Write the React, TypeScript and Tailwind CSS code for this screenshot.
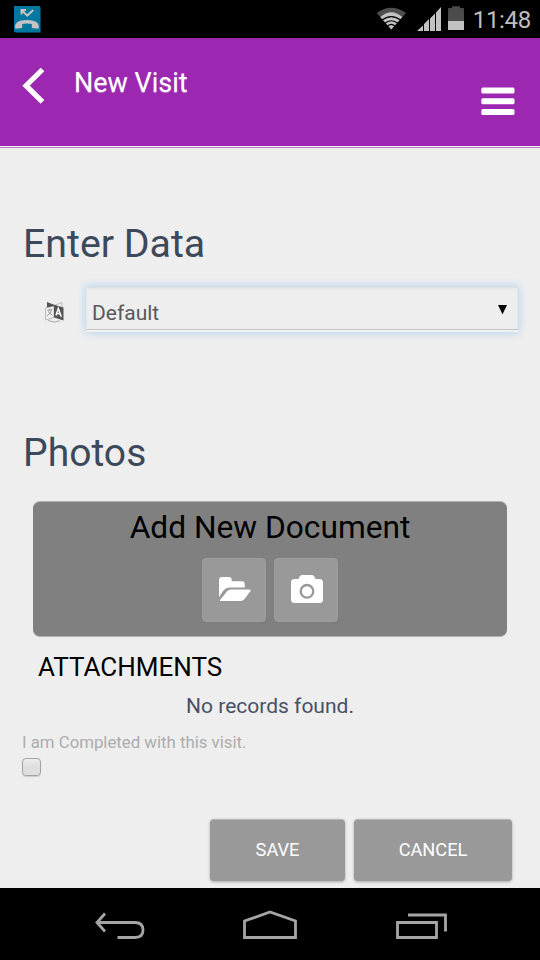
import React from 'react';

function StatusBar() {
  return (
    <div className="flex h-[38px] items-start justify-between bg-black">
      <svg className="ml-[14px] mt-[6px]" width="27" height="27" viewBox="14 6 27 27">
        <rect x="15" y="7" width="26" height="26" rx="1" fill="#033f55" />
        <rect x="14" y="6" width="26" height="26" fill="#0277a0" />
        <path d="M21.500 14.500V10h4.500M21.800 10.200l5.500 5.400 6-5.600" fill="none" stroke="#c4c4c4" strokeWidth="2" />
        <path d="M15.500 28.700C14 24 17 20 27 20S40 24 38.500 28.700L31.800 28V24Q27 22.900 22.200 24V28Z" fill="#c4c4c4" />
      </svg>
      <div className="flex items-start">
        <svg width="90" height="32" viewBox="376 0 90 32">
          <path d="M376.700 13Q391.300 2.500 406 13L391.300 29.500Z" fill="#4e4e4e" />
          <path d="M380.300 17Q391.300 7.500 402.300 17L391.300 29.500Z" fill="#c2c2c2" />
          <path d="M381.500 20.300Q391.300 12.900 401.100 20.300M384.500 23.500Q391.300 18 398.100 23.500M387.500 26.200Q391.300 22.600 395.100 26.200" fill="none" stroke="#000" strokeWidth="1.200" />
          <path d="M417 31L423 25.500V31ZM424 31V24L429 19V31ZM430 31V18.500L435 13.500V31ZM436 31V12.500L441 7V31Z" fill="#c2c2c2" />
          <path d="M448 30V9Q448 8 449 8H452V7Q452 6.300 453 6.300H459Q460 6.300 460 7V8H463Q464 8 464 9V30Z" fill="#4b4b4b" />
          <path d="M448 21H464V30H448Z" fill="#c2c2c2" />
        </svg>
        <span className="mr-[9px] mt-[5px] w-[65px] text-right text-[24px] leading-[30px] tracking-[-0.300px] text-[#bebebe]">11:48</span>
      </div>
    </div>
  );
}

function Header() {
  return (
    <header className="flex h-[110px] items-start border-b border-[#b97fc6] bg-[#9c27b0] shadow-[inset_0_-1px_0_#f6edf7]">
      <svg className="ml-[22px] mt-[29px]" width="23" height="37" viewBox="22 67 23 37">
        <path d="M42.500 69.500L26 85.700L42.500 101.800" fill="none" stroke="#fff" strokeWidth="5.200" />
      </svg>
      <h1 className="ml-[29px] mt-[29px] grow whitespace-nowrap text-[27px] leading-[32px] text-white [text-shadow:0_1px_1px_rgba(255,255,255,.4)]">New Visit</h1>
      <svg className="mr-[25px] mt-[49px]" width="34" height="29" viewBox="0 0 34 29">
        <g fill="#fff">
          <rect x="0.300" y="0.600" width="33.200" height="6" rx="1.500" />
          <rect x="0.300" y="11.300" width="33.200" height="6" rx="1.500" />
          <rect x="0.300" y="22.100" width="33.200" height="6" rx="1.500" />
        </g>
      </svg>
    </header>
  );
}

function LanguageSelect() {
  return (
    <div className="mt-[18px] flex h-[44px] items-start">
      <svg className="ml-[44px] mt-[14px]" width="21" height="22" viewBox="44 301 21 22">
        <path d="M47 303L54 305.500L62 302.500V307M45.500 308L54 305.500V317.500L45.500 320Z" fill="none" stroke="#b5b5b5" strokeWidth=".9" />
        <path d="M47 302L54 304.800V306L47 307.500ZM54 304.800L63.500 307.600V320.500L54 317.500Z" fill="#545454" />
        <path d="M48 320.500Q54 323.600 60 320.800" fill="none" stroke="#aaa" />
        <path d="M47.500 310.500L52.300 309.500M49.500 308.500V310M51.500 310Q50.500 314 46.800 316M48 311.500L52.500 315.300" fill="none" stroke="#939393" strokeWidth=".9" />
        <path d="M56 315.500L58.300 308.500L61.300 316.800M57 313.300L60.200 314" fill="none" stroke="#fff" strokeWidth="1.500" />
      </svg>
      <div className="ml-[21px] flex h-[45px] w-[432px] items-start border-b-2 border-[#f1f1f1] shadow-[0_0_8px_1px_#b5d5ee]">
        <div className="flex h-[43px] w-full items-start justify-between border-b border-[#c7c7c7] bg-[#eee] shadow-[inset_0_1px_2px_#ddd9d9]">
          <span className="ml-[6px] mt-[10px] text-[21px] leading-[32px] text-[#595959]">Default</span>
          <svg className="mr-[10.500px] mt-[18px]" width="10" height="10" viewBox="0 0 10 10"><path d="M0 0H9L4.500 9.300Z" fill="#000" /></svg>
        </div>
      </div>
    </div>
  );
}

const raised = 'border border-[#9d9d9d] bg-[#999] shadow-[0_1px_2px_rgba(0,0,0,.03)]';

function DocumentPanel() {
  return (
    <section className="ml-[33px] mt-[25px] flex h-[136px] w-[474px] flex-col items-center rounded-[7px] border-y border-[#b0b0b0] bg-[#808080]">
      <h3 className="mt-[5px] whitespace-nowrap text-[31.700px] leading-[42px] text-black">Add New Document</h3>
      <div className="mt-[9px] flex gap-[8px]">
        <button className={`flex size-[64px] items-center justify-center rounded-[4px] ${raised}`}>
          <svg className="translate-x-px -translate-y-px" width="34" height="26" viewBox="218 576 34 26" fill="#fff">
            <path d="M219 597V580Q219 577 222 577H229Q231.700 577 231.700 580V581.300H242Q244.700 581.300 244.700 584V587.500H230Q226 587.500 223.500 590.500Z" />
            <path d="M220 600L227.200 591.200Q228.800 589.500 231 589.500H249.500Q251.500 589.500 250.300 591.200L244.500 599Q243 601 240.500 601H221Q219.500 601 220 600Z" />
          </svg>
        </button>
        <button className={`flex size-[64px] items-center justify-center rounded-[4px] ${raised}`}>
          <svg className="translate-x-px -translate-y-px" width="34" height="30" viewBox="290 574 34 30">
            <path d="M291 582.500Q291 579 294.500 579H298.500L299.500 576.700Q300.100 575 302 575H312Q313.900 575 314.500 576.700L315.500 579H319.500Q323 579 323 582.500V599.500Q323 603 319.500 603H294.500Q291 603 291 599.500Z" fill="#fff" />
            <circle cx="307" cy="591.300" r="6.300" fill="none" stroke="#999" strokeWidth="2.300" />
          </svg>
        </button>
      </div>
    </section>
  );
}

function NavBar() {
  return (
    <nav className="flex h-[72px] items-start justify-center bg-black">
      <svg className="mt-[16px]" width="360" height="42" viewBox="90 904 360 42" fill="none" stroke="#a5a5a5" strokeWidth="2.800">
        <path d="M97 922.500H135Q143 922.500 143 930T135 937.500H117.500M105 913.500L97 922.500L105 931.500" />
        <path d="M244.500 937.500V921L270 912L295.500 921V937.500Z" />
        <path d="M397.500 922.500H436.500V937.500H397.500ZM408 915H445.500V931.500" />
      </svg>
    </nav>
  );
}

export default function App() {
  return (
    <div className="flex h-[960px] w-[540px] flex-col overflow-hidden bg-[#eee] font-[Roboto,sans-serif]">
      <StatusBar />
      <Header />
      <main className="flex h-[740px] flex-col">
        <h2 className="ml-[23px] mt-[72px] text-[39.300px] leading-[49px] text-[#3c495b]">Enter Data</h2>
        <LanguageSelect />
        <h2 className="ml-[23px] mt-[99px] text-[39.100px] leading-[46px] text-[#3c495b]">Photos</h2>
        <DocumentPanel />
        <h3 className="ml-[38px] mt-[14px] text-[26px] leading-[32px] text-black">ATTACHMENTS</h3>
        <p className="mt-[9px] text-center text-[21px] leading-[28px] text-[#465164]">No records found.</p>
        <label className="ml-[22px] mt-[12px] flex flex-col text-[16.800px] leading-[20px] text-[#acacac]">
          I am Completed with this visit.
          <span className="mt-[6px] h-[18px] w-[19px] rounded-[4px] border border-[#a2a2a2] bg-linear-to-b from-[#eee] via-[#ddd] to-[#e1e1e1] shadow-[0_1px_1px_#ccc]" />
        </label>
        <div className="mr-[28px] mt-[43px] flex justify-end gap-[9px] text-[18.200px] text-white [text-shadow:0_1px_1px_rgba(0,0,0,.4)]">
          <button className="h-[62px] w-[135px] rounded-[4px] border-t border-[#b5b5b5] bg-[#999] pb-px shadow-[0_1px_3px_rgba(0,0,0,.3)]">SAVE</button>
          <button className="h-[62px] w-[158px] rounded-[4px] border-t border-[#b5b5b5] bg-[#999] pb-px shadow-[0_1px_3px_rgba(0,0,0,.3)]">CANCEL</button>
        </div>
      </main>
      <NavBar />
    </div>
  );
}
